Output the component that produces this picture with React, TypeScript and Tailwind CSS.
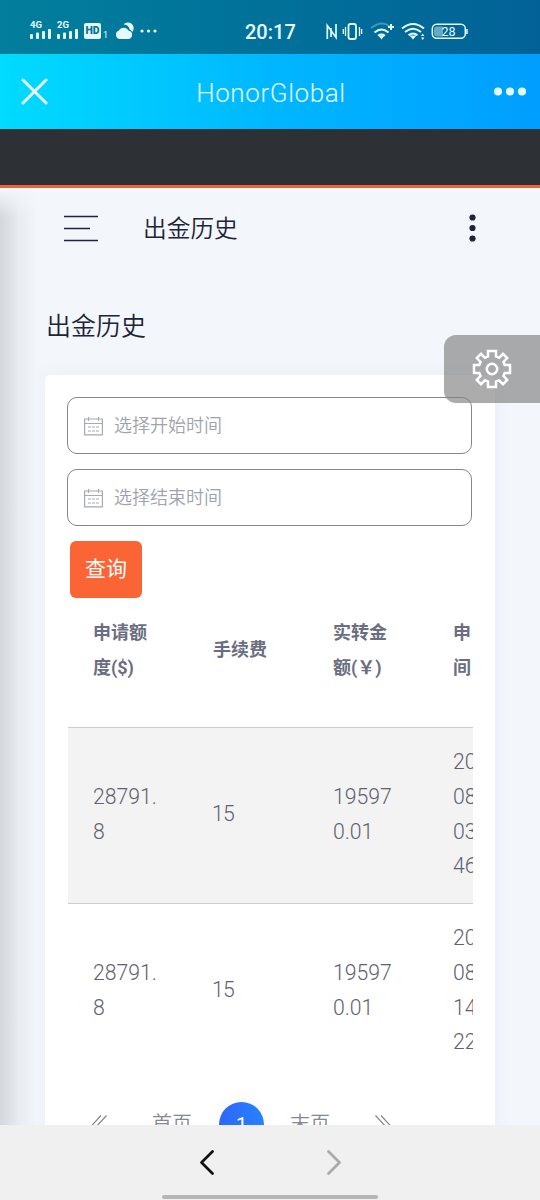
import type { ReactNode } from "react";

type Row = {
  amount: string[];
  fee: string;
  paid: string[];
  date: string[];
};

const rows: Row[] = [
  { amount: ["28791.", "8"], fee: "15", paid: ["19597", "0.01"], date: ["20", "08", "03", "46"] },
  { amount: ["28791.", "8"], fee: "15", paid: ["19597", "0.01"], date: ["20", "08", "14", "22"] },
];

const headers = [["申请额", "度($)"], ["手续费"], ["实转金", "额(￥)"], ["申", "间"]];

const Signal = ({ label }: { label: string }) => (
  <div className="w-[22px]">
    <div className="h-[8px] text-[9.500px] leading-[9px] font-bold">{label}</div>
    <svg width="22" height="10" viewBox="0 0 22 10" fill="currentColor" className="mt-px">
      <rect x="0" y="5" width="3" height="5" rx="1" />
      <rect x="6" y="3.500" width="3" height="6.500" rx="1" />
      <rect x="12" y="2" width="3" height="8" rx="1" />
      <rect x="18" y="0" width="3" height="10" rx="1" />
    </svg>
  </div>
);

const StatusBar = () => (
  <div className="h-[54px] shrink-0 bg-linear-to-r from-[#027f9c] to-[#026297] text-[#e6fbff] flex items-start pt-[20px] pl-[30px]">
    <Signal label="4G" />
    <div className="w-[5px]" />
    <Signal label="2G" />
    <div className="ml-[5px] mt-[3px] w-[17px] h-[16px] rounded-[2px] bg-[#e6fbff] text-[#047594] text-[10.500px] leading-[16px] font-black text-center">
      HD
    </div>
    <span className="w-[9px] pl-[2px] mt-[10px] text-[9px] leading-[10px]">1</span>
    <svg width="20" height="18" viewBox="0 0 20 18" fill="currentColor" className="ml-[5px] mt-[2px]">
      <path d="M5 17a4.300 4.300 0 0 1-1-8.400A5.200 5.200 0 0 1 13.300 8.600 4.300 4.300 0 0 1 14 17z" />
      <path d="M8.500 2.500A5.200 5.200 0 0 1 17.300 10 5 5 0 0 0 14.700 7.500 6.500 6.500 0 0 0 8.500 2.500z" />
    </svg>
    <svg width="18" height="4" viewBox="0 0 18 4" fill="currentColor" className="ml-[5px] mt-[9px]">
      <circle cx="2" cy="2" r="1.600" />
      <circle cx="8.500" cy="2" r="1.600" />
      <circle cx="15" cy="2" r="1.600" />
    </svg>
    <span className="ml-[87px] w-[56px] text-[20px] leading-[24px] font-medium">20:17</span>
    <svg width="148" height="20" viewBox="325 21 148 20" fill="none" stroke="currentColor" strokeWidth="2" className="ml-[24px] mt-px">
      {/* nfc */}
      <path d="M327.300 39V25.500l8.700 12V24M331 28v9" strokeWidth="1.700" />
      {/* vibrate */}
      <rect x="348.500" y="24" width="7.500" height="15" rx="2" strokeWidth="1.800" />
      <path d="M345.500 27v9M343.300 29v5M359.500 27v9M361.600 29v5" strokeWidth="1.300" />
      {/* mobile hotspot */}
      <path d="M371 28q10.500-8 18 -2" opacity=".3" />
      <path d="M374.500 32.500q7-6 14 0M378 35.800q3.500-2.500 7 0" />
      <path d="M378.500 35.500h6l-3 4z" fill="currentColor" stroke="none" />
      <path d="M391 24v6M388 27h6" />
      {/* wifi */}
      <path d="M402 28.500q11-9 22 0M405 32q8-6.500 16 0M408.500 35.300q4.500-3.500 9 0" />
      <path d="M409.500 35.500h7l-3.500 4z" fill="currentColor" stroke="none" />
      <path d="M421 36l1.700-2.500 1.700 2.500zM421 37.500l1.700 2.500 1.700-2.500z" fill="currentColor" stroke="none" />
      {/* battery */}
      <path d="M437 26.500h6v10h-6q-3 0-3-3v-4q0-3 3-3z" fill="currentColor" stroke="none" opacity=".45" />
      <rect x="432.300" y="24.300" width="33" height="14" rx="4.500" strokeWidth="1.500" />
      <path d="M467 29v5" strokeWidth="1.500" />
      <text x="448.500" y="36" fill="currentColor" stroke="none" fontSize="12.500" textAnchor="middle">28</text>
    </svg>
  </div>
);

const AppHeader = () => (
  <div className="h-[75px] shrink-0 bg-linear-to-r from-[#00dbff] via-[#00b7ff] to-[#009eff] text-[#e4fcff] flex items-center pl-[21px] pr-[14px]">
    <svg width="27" height="27" viewBox="0 0 27 27" stroke="currentColor" strokeWidth="3" strokeLinecap="round">
      <path d="M2 2l23 23M25 2L2 25" />
    </svg>
    <h1 className="flex-1 text-center text-[26px] tracking-[0.600px] font-[350] pt-[4px] whitespace-nowrap">HonorGlobal</h1>
    <svg width="32" height="9" viewBox="0 0 32 9" fill="currentColor">
      <circle cx="4" cy="4.500" r="4" />
      <circle cx="16" cy="4.500" r="4" />
      <circle cx="28" cy="4.500" r="4" />
    </svg>
  </div>
);

const DateInput = ({ placeholder }: { placeholder: string }) => (
  <div className="h-[57px] rounded-[10px] border-[1.500px] border-[#85868a] bg-white flex items-center pl-[16px] text-[#a7aab3]">
    <svg width="19" height="20" viewBox="0 0 19 20" fill="none" stroke="currentColor" strokeWidth="1.200">
      <path d="M.6 3h17.800v15.800H.6zM.6 7.500h17.800M4.500 1v4M14.500 1v4" />
      <path d="M4 11h11M4 15h11" strokeDasharray="3 1" />
    </svg>
    <span className="ml-[11px] text-[18px] font-[350] text-[#a0a3ad]">{placeholder}</span>
  </div>
);

const Cell = ({ children }: { children: ReactNode }) => (
  <div className="w-[120px] shrink-0 pl-[26px] flex flex-col justify-center whitespace-nowrap leading-[34.600px]">
    {children}
  </div>
);

const Lines = ({ items }: { items: string[] }) => (
  <>
    {items.map((item) => (
      <span key={item}>{item}</span>
    ))}
  </>
);

const HistoryTable = () => (
  <div className="w-[406px] overflow-hidden text-[#606270]">
    <div className="flex h-[129px] pb-[24px] text-[18px] font-bold text-[#6b6e80]">
      {headers.map((header) => (
        <Cell key={header[0]}>
          <Lines items={header} />
        </Cell>
      ))}
    </div>
    {rows.map((row, index) => (
      <div
        key={index}
        className={`flex text-[21.200px] font-[350] pb-[2px] ml-px ${index === 0 ? "h-[177px] border-y-[1.500px] border-[#cdcdcf] bg-[#f3f3f3]" : "h-[175px]"}`}
      >
        <Cell><span className="-ml-px"><Lines items={row.amount.slice(0, 1)} /></span><span className="-ml-px">{row.amount[1]}</span></Cell>
        <Cell><span className="-ml-[2px] tracking-[-0.800px]">{row.fee}</span></Cell>
        <Cell><span className="-ml-px">{row.paid[0]}</span><span className="-ml-px">{row.paid[1]}</span></Cell>
        <Cell><div className="-ml-px flex flex-col"><Lines items={row.date} /></div></Cell>
      </div>
    ))}
  </div>
);

const Pagination = () => (
  <div className="mt-[22px] h-[46px] flex items-center text-[20px] font-[350] text-[#858791]">
    <svg width="18" height="25" viewBox="0 0 18 25" fill="none" stroke="currentColor" strokeWidth="1.200" className="ml-[22px] mt-[7px]">
      <path d="M12 .5L1 12.500l11 12M17.500 .5L6.500 12.500l11 12" />
    </svg>
    <span className="ml-[45px] w-[41px]">首页</span>
    <span className="ml-[26px] mt-px w-[45px] h-[45px] shrink-0 rounded-full bg-linear-to-r from-[#2e67f8] to-[#2482ff] text-white font-normal flex items-center justify-center shadow-[0_0_20px_rgba(0,0,0,0.04)]">
      1
    </span>
    <span className="ml-[26px] w-[40px]">末页</span>
    <svg width="18" height="25" viewBox="0 0 18 25" fill="none" stroke="currentColor" strokeWidth="1.200" className="ml-[45px] mt-[7px]">
      <path d="M.5 .5l11 12-11 12M6 .5l11 12-11 12" />
    </svg>
  </div>
);

const App = () => {
  return (
    <div className="w-[540px] h-[1200px] overflow-hidden flex flex-col font-[Roboto,'Noto_Sans_CJK_SC',sans-serif]">
      <StatusBar />
      <AppHeader />
      <div className="h-[59px] shrink-0 bg-[#2d3135] border-b-[3px] border-[#ed6338]" />

      <main className="relative flex-1 min-h-0 overflow-hidden bg-[#f3f6fb] text-[#202436]">
        <div className="absolute left-0 top-0 bottom-0 w-[38px] bg-linear-to-r from-[#d4d7db] via-[#e8ebf0] to-[#f3f6fb]" />
        <div className="absolute left-0 top-0 w-[38px] h-[30px] bg-linear-to-b from-[#f3f6fb] to-transparent" />

        <div className="h-[80px] flex items-center pl-[64px] pr-[63px]">
          <svg width="34" height="27" viewBox="0 0 34 27" stroke="currentColor" strokeWidth="1.500">
            <path d="M0 1.500h34M0 13.500h26M0 25.500h34" />
          </svg>
          <span className="ml-[45px] mt-[2px] text-[23.700px] leading-[30px] font-[350]">出金历史</span>
          <svg width="9" height="28" viewBox="0 0 9 28" fill="currentColor" className="ml-auto">
            <circle cx="4.500" cy="3.500" r="3.100" />
            <circle cx="4.500" cy="14" r="3.100" />
            <circle cx="4.500" cy="24.500" r="3.100" />
          </svg>
        </div>
        <h2 className="mt-[39px] ml-[46px] text-[25px] leading-[40px] font-[350]">出金历史</h2>

        <section className="mt-[28px] mx-[45px] h-[800px] rounded-[5px] bg-white pl-[22px] pr-[23px] pt-[22px] shadow-[0_0_20px_rgba(90,80,160,0.05)]">
          <div className="flex flex-col gap-[15px]">
            <DateInput placeholder="选择开始时间" />
            <DateInput placeholder="选择结束时间" />
          </div>
          <button className="mt-[15px] ml-[3px] block w-[72px] h-[57px] rounded-[6px] bg-[#fb6434] text-[21px] text-white">
            查询
          </button>
          <HistoryTable />
          <Pagination />
        </section>

        <div className="absolute right-0 top-[147px] w-[96px] h-[68px] rounded-l-[12px] bg-[#808080]/65 flex items-center pl-[28px] text-white">
          <svg width="40" height="40" viewBox="-20 -20 40 40" fill="none" stroke="currentColor" strokeWidth="2.500">
            <path d="M-4-18H4V-12.500L7-11.200 11-15.200 15.200-11 11.500-7 12.700-4H18V4H12.700L11.500 7 15.200 11 11 15.200 7 11.300 4 12.600V18H-4V12.600L-7 11.300-11 15.200-15.200 11-11.500 7-12.700 4H-18V-4H-12.700L-11.500-7-15.200-11-11-15.200-7-11.200-4-12.500Z" />
            <circle r="5.200" />
          </svg>
        </div>
      </main>

      <footer className="h-[75px] shrink-0 bg-[#f0f0f0] flex flex-col items-center">
        <div className="h-[70px] pt-[24px] flex gap-[113px]">
          <svg width="14" height="26" viewBox="0 0 14 26" fill="none" stroke="#111" strokeWidth="2.700" strokeLinecap="round" strokeLinejoin="round">
            <path d="M12.500 2.500L1.500 13.500l11 11" />
          </svg>
          <svg width="14" height="26" viewBox="0 0 14 26" fill="none" stroke="#aaa" strokeWidth="2.700" strokeLinecap="round" strokeLinejoin="round">
            <path d="M1.500 2.500l11 11-11 11" />
          </svg>
        </div>
        <div className="w-[216px] h-[4px] rounded-full bg-[#b5b5b5]" />
      </footer>
    </div>
  );
};

export default App;
